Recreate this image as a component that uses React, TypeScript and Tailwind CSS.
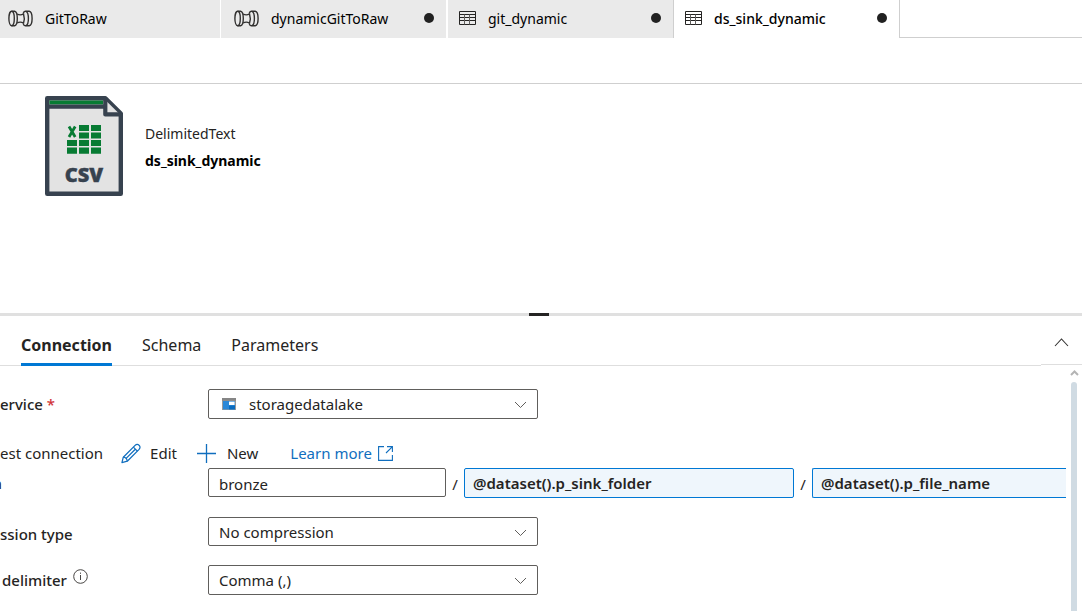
import { useState } from "react";
import type { ReactNode } from "react";

function PipelineIcon() {
  return (
    <svg width="25" height="17" viewBox="0 0 25 17" fill="none" stroke="#323130" strokeWidth="1.4" aria-hidden="true">
      <ellipse cx="3.6" cy="8.5" rx="2.7" ry="7.2" />
      <path d="M3.6 1.3H6.6C8.2 1.6 9.3 4.6 9.3 8.5S8.2 15.4 6.6 15.7H3.6" />
      <path d="M9 4C11.2 5.2 13.4 5.2 15.4 4M9 13C11.2 11.8 13.4 11.8 15.4 13" />
      <path d="M15.4 3.2C16.4 6.2 16.4 10.8 15.4 13.8" />
      <path d="M15.2 3.4C15.6 2 16.4 1.3 17.2 1.3H21.2C23 1.6 24.1 4.6 24.1 8.5S23 15.4 21.2 15.7H17.2C16.4 15.7 15.6 15 15.2 13.6" />
      <path d="M18 1.3C19.6 2 20.4 5 20.4 8.5S19.6 15 18 15.7" />
    </svg>
  );
}

function TableIcon() {
  return (
    <svg width="17" height="14" viewBox="0 0 17 14" fill="none" stroke="#252423" aria-hidden="true">
      <path d="M0.5 0.5H16.5V13.5H0.5Z" />
      <path d="M0 3.5H17M0 6.5H17M0 9.5H17" />
      <path d="M5.5 3.5V13.5M10.5 3.5V13.5" stroke="#605e5c" />
    </svg>
  );
}

function CsvFileIcon() {
  return (
    <svg width="78" height="100" viewBox="0 0 78 100" aria-hidden="true">
      <path d="M2.2 2.2H60.4L75.8 17.6V97.8H2.2Z" fill="#e3e3e3" stroke="#37424f" strokeWidth="4.4" strokeLinejoin="round" />
      <path d="M4.4 4.6H58V8.4H4.4Z" fill="#077b33" />
      <path d="M4 8.4H60V12.8H4Z" fill="#37424f" />
      <path d="M60.3 4V18.4H75" fill="#e3e3e3" stroke="#37424f" strokeWidth="4.2" strokeLinejoin="round" />
      <path d="M22 44H32V50H22ZM22 51.5H32V57.7H22Z" fill="#077b33" />
      <path d="M34 29H44V35H34ZM34 36.5H44V42.5H34ZM34 44H44V50H34ZM34 51.5H44V57.7H34Z" fill="#077b33" />
      <path d="M46 29H56V35H46ZM46 36.5H56V42.5H46ZM46 44H56V50H46ZM46 51.5H56V57.7H46Z" fill="#077b33" />
      <path d="M24 30.5L30.2 41M30.2 30.5L24 41" stroke="#077b33" strokeWidth="2.8" />
      <text
        x="39"
        y="86"
        textAnchor="middle"
        fill="#37424f"
        stroke="#37424f"
        strokeWidth="0.4"
        className="font-['Open_Sans',sans-serif] text-[20px] font-extrabold"
      >
        CSV
      </text>
    </svg>
  );
}

function StorageIcon() {
  return (
    <svg width="14" height="12" viewBox="0 0 14 12" aria-hidden="true">
      <path d="M0 0H14V12H0Z" fill="#9a9a9a" />
      <path d="M0 0H14V2.6H0Z" fill="#858585" />
      <path d="M1 3H13V11.4H1Z" fill="#2b88d8" />
      <path d="M7 3.6H12.6V7H7Z" fill="#fff" />
      <path d="M7 7.6H13V11.4H7Z" fill="#0a6cc0" />
    </svg>
  );
}

function PencilIcon() {
  return (
    <svg width="20" height="21" viewBox="0 0 21 21" fill="none" stroke="#106ebe" strokeWidth="1.3" strokeLinejoin="round" aria-hidden="true">
      <path d="M1 20L2.4 14.4L14.8 2C16.2 0.6 17.8 0.6 19 1.9C20.3 3.1 20.3 4.8 19 6.2L6.6 18.6Z" />
      <path d="M2.4 14.4C4.6 14.6 6.3 16.2 6.6 18.6M13 3.8L17.2 8M15 6L5.4 15.6" />
    </svg>
  );
}

function PlusIcon() {
  return (
    <svg width="19" height="19" viewBox="0 0 19 19" stroke="#106ebe" strokeWidth="1.3" aria-hidden="true">
      <path d="M9.5 0V19M0 9.5H19" />
    </svg>
  );
}

function ExternalIcon() {
  return (
    <svg width="15" height="15" viewBox="0 0 15 15" fill="none" stroke="#106ebe" strokeWidth="1.1" aria-hidden="true">
      <path d="M6 0.6H0.6V14.4H14.4V9M9 0.6H14.4V6M14.2 0.8L8 7" />
    </svg>
  );
}

function InfoIcon() {
  return (
    <svg width="15" height="15" viewBox="0 0 15 15" fill="none" stroke="#484644" aria-hidden="true">
      <circle cx="7.5" cy="7.5" r="6.8" />
      <path d="M7.5 6V11M7.5 3.6V4.8" />
    </svg>
  );
}

function FileTab({ icon, label, dirty, className }: { icon: ReactNode; label: string; dirty?: boolean; className: string }) {
  return (
    <button type="button" className={`flex h-[38px] items-center pb-[2px] text-[14px] text-black ${className}`}>
      {icon}
      <span className="flex-1 text-left">{label}</span>
      {dirty && <span className="mr-3 size-[10px] rounded-full bg-[#212121]" />}
    </button>
  );
}

function SelectBox({ id, value, icon, className }: { id: string; value: string; icon?: ReactNode; className: string }) {
  return (
    <div className="relative w-[330px]">
      {icon && <span className="absolute top-[9px] left-[14px]">{icon}</span>}
      <select id={id} className={`block w-full appearance-none rounded-[2px] border border-[#605e5c] bg-white pt-px text-[15px] text-[#252423] ${className}`}>
        <option>{value}</option>
      </select>
      <svg className="absolute top-3 right-[11px]" width="13" height="8" viewBox="0 0 13 8" fill="none" stroke="#605e5c" aria-hidden="true">
        <path d="M1 1L6.5 6.5L12 1" />
      </svg>
    </div>
  );
}

const sections = ["Connection", "Schema", "Parameters"];

export default function App() {
  const [section, setSection] = useState("Connection");

  return (
    <div className="flex min-h-screen flex-col overflow-hidden bg-white font-['Noto_Sans',sans-serif] text-[#252423]">
      <nav className="flex">
        <FileTab icon={<PipelineIcon />} label="GitToRaw" className="w-[220px] gap-3 bg-[#eaeaea] pl-2" />
        <FileTab icon={<PipelineIcon />} label="dynamicGitToRaw" dirty className="ml-px w-[225px] gap-3 bg-[#eaeaea] pl-[13px]" />
        <FileTab icon={<TableIcon />} label="git_dynamic" dirty className="ml-[2px] w-[225px] gap-3 bg-[#eaeaea] pl-[11px]" />
        <FileTab
          icon={<TableIcon />}
          label="ds_sink_dynamic"
          dirty
          className="w-[227px] gap-3 border-x border-[#cfcfcf] bg-white pl-[11px] font-medium"
        />
        <div className="flex-1 border-b border-[#cfcfcf]" />
      </nav>

      <header className="h-[46px] border-b border-[#cfcfcf]" />

      <section className="flex h-[229px] gap-[22px] pt-3 pl-[45px]">
        <CsvFileIcon />
        <div className="pt-[28px]">
          <p className="text-[14px] leading-5">DelimitedText</p>
          <h1 className="mt-[7px] text-[14px] leading-5 font-bold text-black">ds_sink_dynamic</h1>
        </div>
      </section>

      <div className="flex h-[3px] justify-center bg-[#e0e0e0] pr-1">
        <span className="w-5 bg-[#252423]" />
      </div>

      <div className="flex h-[50px]">
        <div className="flex flex-1 gap-[30px] border-b border-[#dedede] pl-[21px]">
          {sections.map((name) => (
            <button
              key={name}
              type="button"
              onClick={() => setSection(name)}
              className={
                name === section
                  ? "-mb-px border-b-3 border-[#0078d4] pt-[10px] text-[16px] font-bold"
                  : "-mb-px border-b-3 border-transparent pt-[10px] text-[16px]"
              }
            >
              {name}
            </button>
          ))}
        </div>
        <button type="button" aria-label="Collapse panel" className="flex h-[49px] w-[41px] items-center justify-center border-b border-[#dedede] pt-1">
          <svg width="15" height="9" viewBox="0 0 15 9" fill="none" stroke="#323130" strokeWidth="1.1" aria-hidden="true">
            <path d="M1 8L7.5 1L14 8" />
          </svg>
        </button>
      </div>

      <main className="flex flex-1">
        <form className="w-0 flex-1 overflow-hidden pt-[23px] pb-4">
          <div className="flex">
            <label htmlFor="service" className="w-[208px] shrink-0 pt-1 text-[15px] leading-[22px] font-medium">
              ervice <span className="text-[#d13438]">*</span>
            </label>
            <SelectBox id="service" value="storagedatalake" icon={<StorageIcon />} className="h-[30px] pl-[40px]" />
          </div>

          <div className="flex h-[49px] items-center pt-5 text-[15px]">
            <button type="button">est connection</button>
            <button type="button" className="ml-[18px] flex items-center gap-[9px]">
              <PencilIcon />
              Edit
            </button>
            <button type="button" className="ml-5 flex items-center gap-[11px]">
              <PlusIcon />
              New
            </button>
            <a href="#learn-more" className="ml-8 flex items-center gap-[6px] text-[#106ebe]">
              Learn more
              <ExternalIcon />
            </a>
          </div>

          <div className="flex h-[30px] text-[15px]">
            <label htmlFor="container" className="mr-[206px] flex w-[2px] shrink-0 justify-end overflow-hidden leading-[30px] font-medium">
              h
            </label>
            <input
              id="container"
              defaultValue="bronze"
              className="h-[29px] w-[238px] shrink-0 rounded-[2px] border border-[#605e5c] px-[10px] pt-[2px]"
            />
            <span className="w-[18px] shrink-0 text-center leading-[32px]">/</span>
            <input
              aria-label="Folder"
              defaultValue="@dataset().p_sink_folder"
              className="h-[30px] w-[330px] shrink-0 rounded-[2px] border border-[#0078d4] bg-[#eff6fc] px-2 font-semibold"
            />
            <span className="w-[18px] shrink-0 text-center leading-[32px]">/</span>
            <input
              aria-label="File name"
              defaultValue="@dataset().p_file_name"
              className="h-[30px] min-w-0 flex-1 rounded-l-[2px] border border-r-0 border-[#0078d4] bg-[#eff6fc] px-2 font-semibold"
            />
          </div>

          <div className="mt-[19px] flex">
            <label htmlFor="compression" className="w-[208px] shrink-0 pt-[6px] text-[15px] leading-[22px] font-medium">
              ssion type
            </label>
            <SelectBox id="compression" value="No compression" className="h-[29px] pl-[10px]" />
          </div>

          <div className="mt-[19px] flex">
            <label htmlFor="delimiter" className="flex w-[208px] shrink-0 gap-[6px] pt-1 pl-[2px] text-[15px] leading-[22px] font-medium">
              delimiter
              <InfoIcon />
            </label>
            <SelectBox id="delimiter" value="Comma (,)" className="h-[30px] pl-[10px]" />
          </div>
        </form>

        <div className="flex w-4 flex-col items-center pt-1">
          <svg width="9" height="6" viewBox="0 0 9 6" fill="none" stroke="#b4b4b4" strokeWidth="2" aria-hidden="true">
            <path d="M1 5L4.5 1.5L8 5" />
          </svg>
          <span className="mt-[6px] w-[6px] flex-1 rounded-t-full bg-[#d0dbe3]" />
        </div>
      </main>
    </div>
  );
}
